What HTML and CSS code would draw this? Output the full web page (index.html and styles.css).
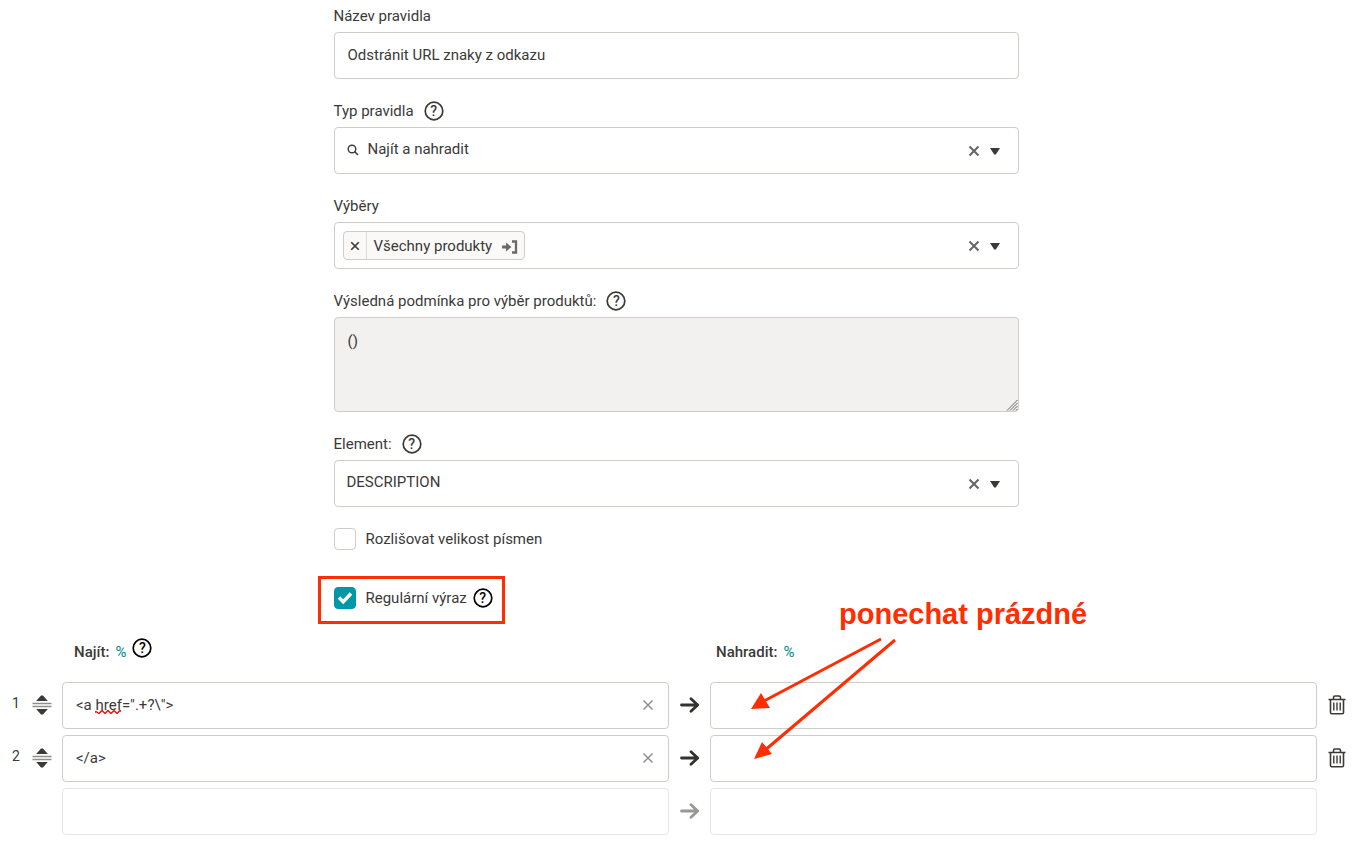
FILE: index.html
```html
<!DOCTYPE html>
<html lang="cs">
<head>
    <meta charset="UTF-8">
    <meta name="viewport" content="width=device-width, initial-scale=1.0">
    <title>Úprava pravidla</title>
    <link rel="stylesheet" href="styles.css">
</head>
<body>
    <svg class="sprite" aria-hidden="true">
        <symbol id="cross" viewBox="0 0 12 12"><path d="M1.5 1.5l9 9M10.5 1.5l-9 9" fill="none" stroke="currentColor"/></symbol>
        <symbol id="caret" viewBox="0 0 10 7"><path d="M0 0h10L5.800 6.500h-1.600z" fill="currentColor"/></symbol>
        <symbol id="ring" viewBox="0 0 20 20"><circle cx="10" cy="10" r="8.800" fill="none" stroke="currentColor" stroke-width="1.700"/></symbol>
        <symbol id="sort" viewBox="0 0 20 20">
            <path d="M9 .5h2l4.800 5.500H4.200zM9 19.500h2l4.800-5.500H4.200z" fill="currentColor"/>
            <path d="M.5 8.500h19M.5 11.500h19" stroke="#8f8f8d" stroke-width="1.600"/>
        </symbol>
        <symbol id="arrow" viewBox="0 0 20 16"><path d="M1.500 8h16M11 1.800L17.700 8 11 14.200" fill="none" stroke="currentColor" stroke-width="2.800" stroke-linecap="round" stroke-linejoin="round"/></symbol>
        <symbol id="trash" viewBox="0 0 18 20">
            <path d="M.5 4.500h17M5.500 4V2.500Q5.500 1 7 1h4q1.500 0 1.500 1.500V4M2.500 5v12.500q0 1.300 1.300 1.300h10.400q1.300 0 1.300-1.300V5" fill="none" stroke="currentColor" stroke-width="1.600"/>
            <path d="M5.800 7.500v8M9 7.500v8M12.200 7.500v8" stroke="currentColor" stroke-width="1.400"/>
        </symbol>
    </svg>

    <form class="page">
        <div class="form">
            <div class="label-row"><label for="name">Název pravidla</label></div>
            <input class="box" type="text" id="name" value="Odstránit URL znaky z odkazu">

            <div class="label-row">
                <label for="type">Typ pravidla</label>
                <button type="button" class="help"><svg width="20" height="20"><use href="#ring"/></svg><span>?</span></button>
            </div>
            <div class="box select">
                <svg class="search" width="12" height="12" viewBox="0 0 12 12"><circle cx="5" cy="5" r="3.800" fill="none" stroke="currentColor" stroke-width="1.400"/><path d="M7.500 7.500l3.500 3.500" stroke="currentColor" stroke-width="1.600"/></svg>
                <select id="type"><option>Najít a nahradit</option></select>
                <button type="button" class="clear" aria-label="Vymazat"><svg width="12" height="12"><use href="#cross"/></svg></button>
                <svg class="caret" width="10" height="7"><use href="#caret"/></svg>
            </div>

            <div class="label-row"><label for="selection">Výběry</label></div>
            <div class="box select">
                <div class="tag">
                    <button type="button" class="tag-remove" aria-label="Odebrat"><svg width="10" height="10"><use href="#cross"/></svg></button>
                    <span>Všechny produkty</span>
                    <a href="#" class="tag-open" aria-label="Otevřít"><svg width="16" height="14" viewBox="0 0 16 14"><path d="M0 5.500h4V2.500l5.500 4.500L4 11.500v-3H0z" fill="currentColor"/><path d="M10 1.500h4v11h-4" fill="none" stroke="currentColor" stroke-width="2.300"/></svg></a>
                </div>
                <select id="selection"><option></option></select>
                <button type="button" class="clear" aria-label="Vymazat"><svg width="12" height="12"><use href="#cross"/></svg></button>
                <svg class="caret" width="10" height="7"><use href="#caret"/></svg>
            </div>

            <div class="label-row">
                <label for="condition">Výsledná podmínka pro výběr produktů:</label>
                <button type="button" class="help"><svg width="20" height="20"><use href="#ring"/></svg><span>?</span></button>
            </div>
            <textarea class="box condition" id="condition" readonly>()</textarea>

            <div class="label-row">
                <label for="element">Element:</label>
                <button type="button" class="help"><svg width="20" height="20"><use href="#ring"/></svg><span>?</span></button>
            </div>
            <div class="box select">
                <select id="element"><option>DESCRIPTION</option></select>
                <button type="button" class="clear" aria-label="Vymazat"><svg width="12" height="12"><use href="#cross"/></svg></button>
                <svg class="caret" width="10" height="7"><use href="#caret"/></svg>
            </div>

            <div class="check">
                <input type="checkbox" id="case">
                <label for="case">Rozlišovat velikost písmen</label>
            </div>
            <div class="check marked">
                <input type="checkbox" id="regex" checked>
                <label for="regex">Regulární výraz</label>
                <button type="button" class="help dark"><svg width="20" height="20"><use href="#ring"/></svg><span>?</span></button>
            </div>
        </div>

        <div class="row head">
            <div class="head-cell find">
                <b>Najít:</b> <a href="#">%</a>
                <button type="button" class="help dark raised"><svg width="20" height="20"><use href="#ring"/></svg><span>?</span></button>
            </div>
            <div class="head-cell replace">
                <b>Nahradit:</b> <a href="#">%</a>
                <div class="note">ponechat prázdné</div>
                <svg class="note-arrows" width="150" height="130" viewBox="0 0 150 130">
                    <path d="M131 3L14 65M145 4L14 115" stroke="#ff2d00" stroke-width="3"/>
                    <path d="M1 73l10-16 9 15zM4 123l8-17 10 12z" fill="#ff2d00"/>
                </svg>
            </div>
        </div>
        <div class="row">
            <span class="number">1</span>
            <button type="button" class="sort" aria-label="Přesunout"><svg width="20" height="20"><use href="#sort"/></svg></button>
            <div class="find-box">
                <input class="box" type="text" aria-label="Najít 1" spellcheck="false" value="&lt;a href=&quot;.+?\&quot;&gt;">
                <svg class="squiggle" width="27" height="5" viewBox="0 0 27 5"><path d="M0 3.500l1-1 3 2 3-3 3 3 3-3 3 3 3-3 3 3 3-3 1 1" fill="none" stroke="#f00" stroke-width="1.300"/></svg>
                <button type="button" class="erase" aria-label="Vymazat"><svg width="12" height="12"><use href="#cross"/></svg></button>
            </div>
            <svg class="arrow" width="20" height="16"><use href="#arrow"/></svg>
            <input class="box" type="text" aria-label="Nahradit 1">
            <button type="button" class="trash" aria-label="Smazat"><svg width="18" height="20"><use href="#trash"/></svg></button>
        </div>
        <div class="row">
            <span class="number">2</span>
            <button type="button" class="sort" aria-label="Přesunout"><svg width="20" height="20"><use href="#sort"/></svg></button>
            <div class="find-box">
                <input class="box" type="text" aria-label="Najít 2" spellcheck="false" value="&lt;/a&gt;">
                <button type="button" class="erase" aria-label="Vymazat"><svg width="12" height="12"><use href="#cross"/></svg></button>
            </div>
            <svg class="arrow" width="20" height="16"><use href="#arrow"/></svg>
            <input class="box" type="text" aria-label="Nahradit 2">
            <button type="button" class="trash" aria-label="Smazat"><svg width="18" height="20"><use href="#trash"/></svg></button>
        </div>
        <div class="row new">
            <div class="find-box"><input class="box" type="text" aria-label="Najít 3"></div>
            <svg class="arrow" width="20" height="16"><use href="#arrow"/></svg>
            <input class="box" type="text" aria-label="Nahradit 3">
        </div>
    </form>
</body>
</html>
```
FILE: styles.css
```css
* {
    box-sizing: border-box;
}
body {
    margin: 0;
    background: #fff;
    color: #3b3a38;
    font: 15px/20px Roboto, "Noto Sans", sans-serif;
}
input, select, textarea, button {
    font: inherit;
    color: inherit;
}
button {
    padding: 0;
    border: 0;
    background: none;
    cursor: pointer;
}
svg {
    display: block;
}
.sprite {
    display: none;
}
.page {
    padding: 0 9px 16px 6px;
}
.form {
    max-width: 685px;
    margin: 0 auto;
}

/* form fields */
.label-row {
    display: flex;
    align-items: center;
    gap: 10px;
    height: 32px;
}
.box {
    display: block;
    width: 100%;
    height: 47px;
    padding: 0 13px 2px;
    border: 1px solid #cfcdc8;
    border-radius: 4px;
    background: #fff;
}
.box + .label-row {
    margin-top: 16px;
}
.condition {
    height: 95px;
    padding: 13px;
    background: #f2f1f0;
    resize: both;
}
.condition::-webkit-resizer {
    background: url("data:image/svg+xml,%3Csvg xmlns='http://www.w3.org/2000/svg' viewBox='0 0 12 12'%3E%3Cpath d='M1 11.500L11.500 1M4 11.500L11.500 4M7 11.500L11.500 7M10 11.500l1.500-1.500' stroke='%23666'/%3E%3C/svg%3E") right bottom / 12px no-repeat;
}
.select {
    display: flex;
    align-items: center;
    padding: 0 18px 0 8px;
}
.select select {
    flex: 1;
    min-width: 0;
    height: 40px;
    padding: 0 4px 3px;
    border: 0;
    background: none;
    appearance: none;
}
.search {
    margin: 0 5px 2px 4px;
}
.clear {
    margin-right: 10px;
    color: #666;
    stroke-width: 2;
}
.caret {
    margin-top: 2px;
}
.tag {
    display: flex;
    align-items: center;
    height: 29px;
    border: 1px solid #cfcdc8;
    border-radius: 4px;
    background: #faf9f8;
}
.tag-remove {
    display: flex;
    align-items: center;
    justify-content: center;
    width: 23px;
    height: 27px;
    margin-right: 7px;
    border-right: 1px solid #dddbd8;
    stroke-width: 2;
}
.tag-open {
    margin: 2px 6px 0 10px;
    color: #6b6a68;
}
.help {
    display: grid;
    place-items: center;
    flex: none;
    font-size: 14px;
    font-weight: 500;
}
.help > * {
    grid-area: 1 / 1;
}
.dark {
    color: #000;
}

/* checkboxes */
.check {
    display: flex;
    align-items: center;
    height: 22px;
    margin-top: 21px;
}
.check input {
    width: 22px;
    height: 22px;
    margin: 0 10px 0 0;
    border: 1px solid #cfcdc8;
    border-radius: 4px;
    background: #fff;
    appearance: none;
}
.check input:checked {
    border-color: #0097a7;
    background: #0097a7 url("data:image/svg+xml,%3Csvg xmlns='http://www.w3.org/2000/svg' viewBox='0 0 20 20'%3E%3Cpath d='M4 9.500l4.200 4.200L16 5.500' fill='none' stroke='white' stroke-width='3.500'/%3E%3C/svg%3E") center / 20px no-repeat;
}
.check .help {
    margin-left: 6px;
}
.marked {
    width: fit-content;
    height: 48px;
    margin: 26px 0 0 -16px;
    padding: 0 9px 4px 13px;
    border: 3px solid #ff2d00;
}

/* find and replace rows */
.row {
    display: grid;
    grid-template-columns: 20px 36px 1fr 41px 1fr 29px;
    align-items: center;
    margin-bottom: 6px;
}
.head {
    height: 56px;
    margin-bottom: 2px;
}
.head-cell {
    position: relative;
    display: flex;
    align-items: center;
    gap: 6px;
    height: 56px;
    padding-left: 12px;
}
.head-cell b {
    font-weight: 500;
}
.head-cell a {
    color: #0b7f8a;
    text-decoration: none;
}
.find, .find-box {
    grid-column: 3;
}
.replace {
    grid-column: 5;
    padding-left: 6px;
}
.raised {
    margin-bottom: 8px;
}
.number {
    margin-bottom: 6px;
    font-size: 14px;
    text-align: center;
}
.sort {
    width: 20px;
    margin: 0 0 2px 6px;
}
.find-box {
    position: relative;
}
.erase {
    position: absolute;
    top: 17px;
    right: 15px;
    color: #8f8f8d;
    stroke-width: 1.5px;
}
.squiggle {
    position: absolute;
    top: 27px;
    left: 33px;
}
.arrow {
    justify-self: center;
    margin-bottom: 1px;
    color: #333230;
}
.trash {
    justify-self: end;
    margin-bottom: 2px;
}
.new .box {
    border-color: #e6e5e3;
}
.new .arrow {
    color: #999896;
}

/* handwritten hint over the replace column */
.note {
    position: absolute;
    top: -26px;
    left: 129px;
    color: #ff2d00;
    font: bold 29px/32px "Liberation Sans", Arial, sans-serif;
    white-space: nowrap;
}
.note-arrows {
    position: absolute;
    top: 12px;
    left: 40px;
    z-index: 1;
    pointer-events: none;
}
```
